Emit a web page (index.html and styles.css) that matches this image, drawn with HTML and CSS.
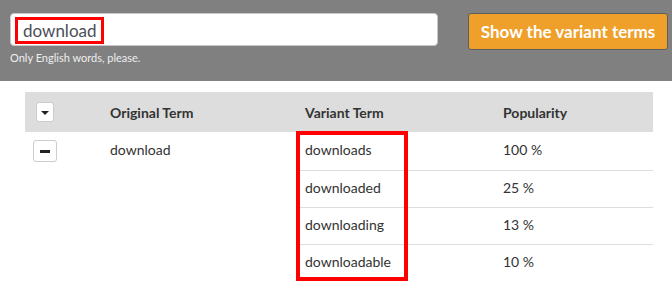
FILE: index.html
```html
<!DOCTYPE html>
<html>
<head>
    <meta charset="UTF-8">
    <title>Variant terms</title>
    <link rel="stylesheet" href="styles.css">
</head>
<body>
    <div class="search-bar">
        <div class="search-field">
            <div class="fake-input"><span class="mark">download</span></div>
            <div class="hint">Only English words, please.</div>
        </div>
        <button class="show-btn">Show the variant terms</button>
    </div>

    <div class="terms">
        <div class="terms-head">
            <div class="cell ctrl"><span class="toggle-btn"><span class="caret"></span></span></div>
            <div class="cell">Original Term</div>
            <div class="cell">Variant Term</div>
            <div class="cell">Popularity</div>
        </div>
        <div class="terms-body">
            <div class="cell ctrl span-all"><span class="minus-btn"><span class="bar"></span></span></div>
            <div class="cell orig span-all">download</div>
            <div class="cell variant">downloads</div>
            <div class="cell pop">100 %</div>
            <div class="cell variant sep">downloaded</div>
            <div class="cell pop sep">25 %</div>
            <div class="cell variant sep">downloading</div>
            <div class="cell pop sep">13 %</div>
            <div class="cell variant sep">downloadable</div>
            <div class="cell pop sep">10 %</div>
            <div class="highlight"></div>
        </div>
    </div>
</body>
</html>
```

FILE: styles.css
```css
body {
    margin: 0;
    padding: 0;
    font-family: Lato, "Open Sans", sans-serif;
    background-color: #fff;
    color: #333;
}
.search-bar {
    display: flex;
    align-items: flex-start;
    height: 81px;
    padding: 13px 4px 0 10px;
    box-sizing: border-box;
    background-color: #808080;
}
.search-field {
    width: 428px;
}
.fake-input {
    height: 33px;
    box-sizing: border-box;
    padding: 3px 4px;
    background-color: #fff;
    border: 1px solid #c8c8c8;
    border-radius: 4px;
}
.mark {
    display: inline-block;
    height: 27px;
    box-sizing: border-box;
    padding: 0 4px 0 5px;
    border: 3px solid #f00;
    font-size: 17px;
    line-height: 21px;
    color: #4a4e57;
}
.hint {
    margin-top: 5px;
    font-size: 11px;
    color: #eee;
}
.show-btn {
    margin-left: auto;
    width: 200px;
    height: 37px;
    padding: 0;
    background-color: #efa02a;
    border: 1px solid #5e5e5e;
    border-radius: 3px;
    font-family: Lato, sans-serif;
    font-weight: bold;
    font-size: 17px;
    color: #fff;
}
.terms {
    margin: 11px 19px 0 25px;
}
.terms-head,
.terms-body {
    display: grid;
    grid-template-columns: 76px 195px 198px 159px;
}
.terms-head {
    height: 40px;
    background-color: #ddd;
    font-weight: bold;
    font-size: 14px;
    color: #333;
}
.terms-body {
    position: relative;
    grid-template-rows: 38px 37px 37px 37px;
    font-size: 14px;
    color: #333;
}
.cell {
    display: flex;
    align-items: center;
    padding-left: 9px;
}
.terms-head .ctrl {
    padding-left: 11px;
}
.terms-body .ctrl {
    grid-column: 1;
    padding-left: 8px;
    align-items: flex-start;
    padding-top: 8px;
}
.orig {
    grid-column: 2;
    align-items: flex-start;
    padding-top: 9px;
}
.span-all {
    grid-row: 1 / 5;
}
.variant {
    grid-column: 3;
    padding-bottom: 3px;
}
.pop {
    grid-column: 4;
    padding-bottom: 3px;
}
.sep {
    border-top: 1px solid #ddd;
}
.toggle-btn {
    display: flex;
    align-items: center;
    justify-content: center;
    width: 18px;
    height: 20px;
    box-sizing: border-box;
    background-color: #fff;
    border: 1px solid #ccc;
    border-radius: 3px;
}
.caret {
    width: 0;
    height: 0;
    border-left: 4px solid transparent;
    border-right: 4px solid transparent;
    border-top: 4px solid #222;
    margin-top: 1px;
}
.minus-btn {
    display: flex;
    align-items: center;
    justify-content: center;
    width: 24px;
    height: 22px;
    box-sizing: border-box;
    background-color: #fff;
    border: 1px solid #ccc;
    border-radius: 3px;
}
.bar {
    width: 10px;
    height: 3px;
    background-color: #222;
}
.highlight {
    position: absolute;
    left: 271px;
    top: -1px;
    width: 112px;
    height: 150px;
    box-sizing: border-box;
    border: 4px solid #f00;
    pointer-events: none;
}
```
